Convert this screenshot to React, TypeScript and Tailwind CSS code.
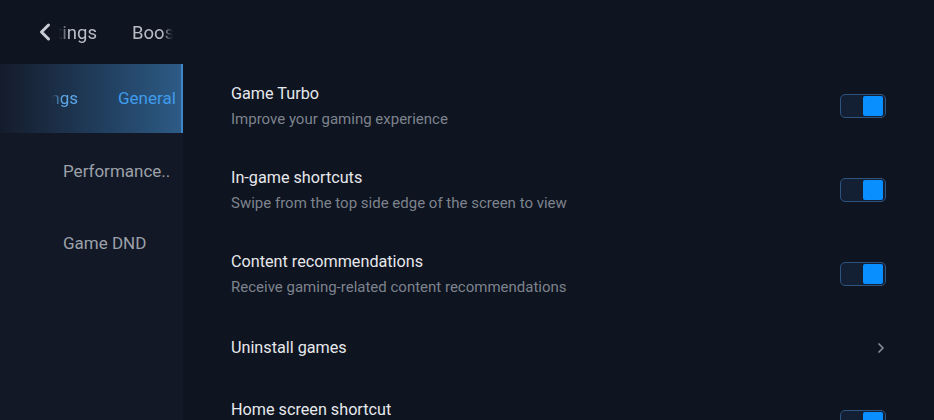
import { ChevronLeft, ChevronRight } from "lucide-react";

function Toggle() {
  return (
    <div className="w-[46px] h-[24px] rounded-[5px] border border-[#2d5580] bg-[#131f33] flex items-center justify-end pr-[2px]">
      <div className="w-[20px] h-[20px] rounded-[2px] bg-[#0a8fff]" />
    </div>
  );
}

type Row = { title: string; sub?: string; kind: "toggle" | "link" };

const rows: Row[] = [
  { title: "Game Turbo", sub: "Improve your gaming experience", kind: "toggle" },
  { title: "In-game shortcuts", sub: "Swipe from the top side edge of the screen to view", kind: "toggle" },
  { title: "Content recommendations", sub: "Receive gaming-related content recommendations", kind: "toggle" },
  { title: "Uninstall games", kind: "link" },
  { title: "Home screen shortcut", sub: "Add a shortcut to the home screen", kind: "toggle" },
];

export default function App() {
  return (
    <div
      className="w-[934px] h-[420px] overflow-hidden bg-[#0e1420] flex flex-col"
      style={{ fontFamily: "Roboto, 'Noto Sans', sans-serif" }}
    >
      {/* top tabs */}
      <div className="h-[64px] shrink-0 flex items-center pt-[3px] pl-[31px] text-[18.5px] text-[#b9bec6]">
        <ChevronLeft className="w-[28px] h-[28px] text-[#c8ccd2] -mt-[4px]" strokeWidth={2.6} />
        <div
          className="w-[38px] overflow-hidden flex justify-end"
          style={{ maskImage: "linear-gradient(to right, transparent 0, black 10px)" }}
        >
          <span className="whitespace-nowrap">Settings</span>
        </div>
        <div
          className="w-[41px] overflow-hidden ml-[35px]"
          style={{ maskImage: "linear-gradient(to right, black 30px, transparent 41px)" }}
        >
          <span className="whitespace-nowrap">Boost</span>
        </div>
      </div>

      <div className="flex flex-1 min-h-0">
        {/* sidebar */}
        <div className="w-[183px] shrink-0 bg-[#121826] flex flex-col">
          <div className="h-[69px] flex items-center bg-gradient-to-r from-[#141c2b] via-[#1f3a58] to-[#2d5b86] border-r-2 border-[#3f86c8] text-[17px]">
            <div
              className="w-[26px] ml-[52px] overflow-hidden flex justify-end text-[#5ea6e6]"
              style={{ maskImage: "linear-gradient(to right, transparent 0, black 10px)" }}
            >
              <span className="whitespace-nowrap">Settings</span>
            </div>
            <div className="ml-[40px] overflow-hidden flex-1 text-[#3f9cec] whitespace-nowrap">General</div>
          </div>
          <div className="h-[72px] mt-[3px] flex items-center pl-[63px] text-[17px] text-[#9ca1a9]">Performance..</div>
          <div className="h-[72px] flex items-center pl-[63px] text-[17px] text-[#9ca1a9]">Game DND</div>
        </div>

        {/* main list */}
        <div className="flex-1 px-[48px] flex flex-col">
          {rows.map((r) => (
            <div
              key={r.title}
              className={`${r.sub ? "h-[84px]" : "h-[64px]"} shrink-0 flex items-center justify-between`}
            >
              <div className="flex flex-col">
                <div className="text-[16.2px] leading-[20px] text-[#e6e8ec]">{r.title}</div>
                {r.sub && <div className="text-[15px] leading-[20px] mt-[5px] text-[#7d838d]">{r.sub}</div>}
              </div>
              {r.kind === "toggle" ? (
                <Toggle />
              ) : (
                <ChevronRight className="w-[16px] h-[16px] text-[#8a9099] -mr-[3px]" strokeWidth={2.5} />
              )}
            </div>
          ))}
        </div>
      </div>
    </div>
  );
}
